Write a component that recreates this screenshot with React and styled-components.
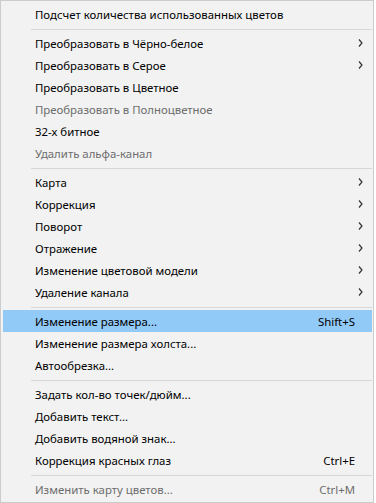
import React from 'react';
import styled, { createGlobalStyle } from 'styled-components';

const GlobalStyle = createGlobalStyle`
body {
  margin: 0;
  background: #ffffff;
}
`

const Menu = styled.div`
width: 374px;
box-sizing: border-box;
border: 1px solid #cccccc;
background: #f2f2f2;
padding: 2px 1px 2px 2px;
font-family: "Segoe UI", "Noto Sans", sans-serif;
font-size: 11.4px;
`

const Item = styled.div`
height: 22px;
display: flex;
align-items: center;
padding-left: 32px;
padding-right: 17px;
color: ${props => props.disabled ? '#6d6d6d' : '#000000'};
background: ${props => props.active ? '#91c9f7' : 'transparent'};
white-space: nowrap;
`

const Label = styled.span`
flex: 1;
`

const Shortcut = styled.span`
color: inherit;
`

const Arrow = styled.span`
display: flex;
align-items: center;
margin-right: -8px;
`

const Separator = styled.div`
height: 7px;
padding-left: 28px;
box-sizing: border-box;
padding-top: 4px;

&::after {
  content: "";
  display: block;
  height: 1px;
  background: #d7d7d7;
}
`

const Chevron = () => (
    <svg width="5" height="8" viewBox="0 0 5 8">
        <path d="M1 0.5 L4 4 L1 7.5" fill="none" stroke="#333333" strokeWidth="1.2" />
    </svg>
);

const menu = [
    { label: 'Подсчет количества использованных цветов' },
    'sep',
    { label: 'Преобразовать в Чёрно-белое', sub: true },
    { label: 'Преобразовать в Серое', sub: true },
    { label: 'Преобразовать в Цветное' },
    { label: 'Преобразовать в Полноцветное', disabled: true },
    { label: '32-х битное' },
    { label: 'Удалить альфа-канал', disabled: true },
    'sep',
    { label: 'Карта', sub: true },
    { label: 'Коррекция', sub: true },
    { label: 'Поворот', sub: true },
    { label: 'Отражение', sub: true },
    { label: 'Изменение цветовой модели', sub: true },
    { label: 'Удаление канала', sub: true },
    'sep',
    { label: 'Изменение размера...', shortcut: 'Shift+S', active: true },
    { label: 'Изменение размера холста...' },
    { label: 'Автообрезка...' },
    'sep',
    { label: 'Задать кол-во точек/дюйм...' },
    { label: 'Добавить текст...' },
    { label: 'Добавить водяной знак...' },
    { label: 'Коррекция красных глаз', shortcut: 'Ctrl+E' },
    'sep',
    { label: 'Изменить карту цветов...', shortcut: 'Ctrl+M', disabled: true },
];

const App = () => {
return (
    <>
    <GlobalStyle />
    <Menu>
        {menu.map((item, i) => item === 'sep'
            ? <Separator key={i} />
            : (
            <Item key={i} disabled={item.disabled} active={item.active}>
                <Label>{item.label}</Label>
                {item.shortcut && <Shortcut>{item.shortcut}</Shortcut>}
                {item.sub && <Arrow><Chevron /></Arrow>}
            </Item>
        ))}
    </Menu>
    </>
);
}

export default App;
